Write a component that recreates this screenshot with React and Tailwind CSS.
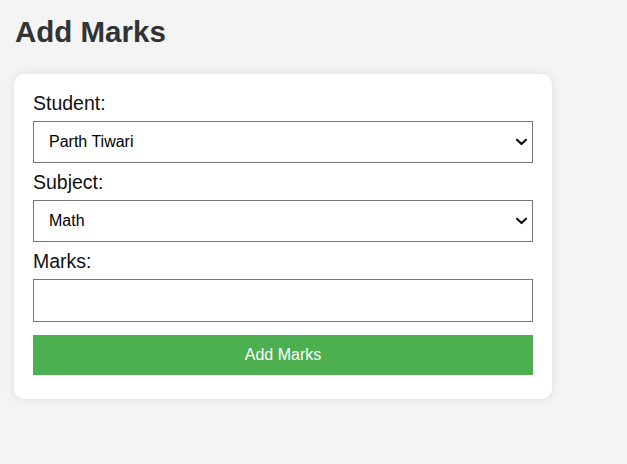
function Chevron() {
  return (
    <svg
      className="pointer-events-none absolute right-[6px] top-1/2 -translate-y-1/2"
      width="11"
      height="7"
      viewBox="0 0 11 7"
      fill="none"
    >
      <path d="M1 1.2 L5.5 5.5 L10 1.2" stroke="#111" strokeWidth="2.2" strokeLinecap="round" strokeLinejoin="round" />
    </svg>
  );
}

function Select({ value }) {
  return (
    <div className="relative mb-[8px] w-[500px]">
      <select className="block w-[500px] h-[42px] appearance-none border border-[#767676] bg-white pl-[15px] pr-[24px] text-[16px] text-black">
        <option>{value}</option>
      </select>
      <Chevron />
    </div>
  );
}

export default function App() {
  return (
    <div className="min-h-[464px] bg-[#f4f4f4] px-[14px] pt-[15px] font-['Liberation_Sans',Arial,sans-serif]">
      <h1 className="text-[29.5px] font-bold leading-[34px] text-[#333] ml-[1px]">Add Marks</h1>
      <form
        className="mt-[25px] w-[538px] rounded-[10px] bg-white px-[19px] pt-[18px] pb-[24px] shadow-[0_0_10px_rgba(0,0,0,0.1)]"
        onSubmit={(e) => e.preventDefault()}
      >
        <label className="block text-[19.5px] leading-[22px] text-[#111] mb-[7px]">Student:</label>
        <Select value="Parth Tiwari" />
        <label className="block text-[19.5px] leading-[22px] text-[#111] mb-[7px]">Subject:</label>
        <Select value="Math" />
        <label className="block text-[19.5px] leading-[22px] text-[#111] mb-[7px]">Marks:</label>
        <input
          type="number"
          className="block w-[500px] h-[43px] border border-[#767676] bg-white px-[10px] text-[16px] text-black"
        />
        <button
          type="submit"
          className="mt-[13px] block w-[500px] h-[40px] bg-[#4caf50] text-[16px] text-white"
        >
          Add Marks
        </button>
      </form>
    </div>
  );
}
